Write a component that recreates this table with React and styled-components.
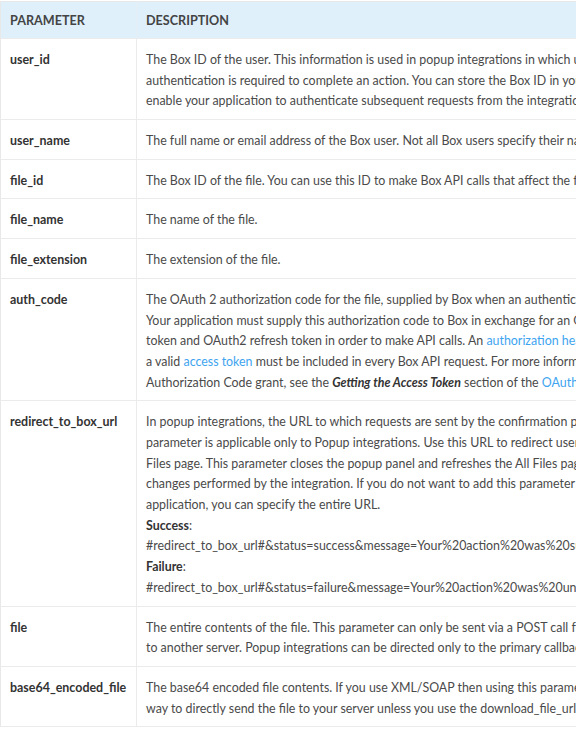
import React from 'react'
import styled, { createGlobalStyle } from 'styled-components'

const GlobalStyle = createGlobalStyle`
  html, body {
    margin: 0;
    padding: 0;
    background: #fff;
    overflow: hidden;
  }
  body {
    font-family: Lato, "Open Sans", sans-serif;
    font-size: 12.4px;
    color: #4a4a4a;
  }
`

const Page = styled.div`
  padding-top: 1px;
  width: 576px;
  overflow: hidden;
`

const Table = styled.table`
  border-collapse: collapse;
  width: 800px;
  table-layout: fixed;
  border-left: 1px solid #e8e8e8;
  border-top: 1px solid #e8e8e8;
`

const HeadCell = styled.th`
  background: #dff0fb;
  color: #444;
  font-size: 12.6px;
  font-weight: 700;
  text-transform: uppercase;
  text-align: left;
  line-height: 21px;
  padding: 8px 9px 7px;
  border-right: 1px solid #e4eef4;
  &:first-child {
    width: 117px;
  }
`

const NameCell = styled.td`
  vertical-align: top;
  font-size: 12.45px;
  font-weight: 700;
  color: #333;
  line-height: 20.7px;
  padding: 11px 9px 7px;
  border-right: 1px solid #ebebeb;
  border-top: 1px solid #ebebeb;
  border-bottom: 1px solid #ebebeb;
`

const DescCell = styled.td`
  vertical-align: top;
  line-height: 20.7px;
  padding: 11px 9px 7px;
  border-top: 1px solid #ebebeb;
  border-bottom: 1px solid #ebebeb;
`

const Line = styled.div`
  white-space: nowrap;
  line-height: 20.7px;
  height: 20.7px;
`

const Link = styled.a`
  color: #3ea4f0;
  text-decoration: none;
`

const Strong = styled.strong`
  font-weight: 700;
  color: #333;
`

const rows = [
  {
    name: 'user_id',
    lines: [
      'The Box ID of the user. This information is used in popup integrations in which user',
      'authentication is required to complete an action. You can store the Box ID in your',
      'enable your application to authenticate subsequent requests from the integration.',
    ],
  },
  {
    name: 'user_name',
    lines: ['The full name or email address of the Box user. Not all Box users specify their name.'],
  },
  {
    name: 'file_id',
    lines: ['The Box ID of the file. You can use this ID to make Box API calls that affect the file.'],
  },
  { name: 'file_name', lines: ['The name of the file.'] },
  { name: 'file_extension', lines: ['The extension of the file.'] },
  {
    name: 'auth_code',
    lines: [
      'The OAuth 2 authorization code for the file, supplied by Box when an authentication',
      'Your application must supply this authorization code to Box in exchange for an OAuth2',
      <>
        token and OAuth2 refresh token in order to make API calls. An{' '}
        <Link href="#">authorization header</Link>
      </>,
      <>
        a valid <Link href="#">access token</Link> must be included in every Box API request. For more information
      </>,
      <>
        Authorization Code grant, see the <Strong><em>Getting the Access Token</em></Strong> section of the{' '}
        <Link href="#">OAuth 2</Link>
      </>,
    ],
  },
  {
    name: 'redirect_to_box_url',
    lines: [
      'In popup integrations, the URL to which requests are sent by the confirmation prompt.',
      'parameter is applicable only to Popup integrations. Use this URL to redirect users',
      'Files page. This parameter closes the popup panel and refreshes the All Files page',
      'changes performed by the integration. If you do not want to add this parameter',
      'application, you can specify the entire URL.',
      <><Strong>Success</Strong>:</>,
      '#redirect_to_box_url#&status=success&message=Your%20action%20was%20successful',
      <><Strong>Failure</Strong>:</>,
      '#redirect_to_box_url#&status=failure&message=Your%20action%20was%20unsuccessful',
    ],
  },
  {
    name: 'file',
    lines: [
      'The entire contents of the file. This parameter can only be sent via a POST call from',
      'to another server. Popup integrations can be directed only to the primary callback',
    ],
  },
  {
    name: 'base64_encoded_file',
    lines: [
      'The base64 encoded file contents. If you use XML/SOAP then using this parameter',
      'way to directly send the file to your server unless you use the download_file_url',
    ],
  },
]

const App = () => {
  return (
    <>
      <GlobalStyle />
      <Page>
        <Table>
          <thead>
            <tr>
              <HeadCell>Parameter</HeadCell>
              <HeadCell>Description</HeadCell>
            </tr>
          </thead>
          <tbody>
            {rows.map((row) => (
              <tr key={row.name}>
                <NameCell>{row.name}</NameCell>
                <DescCell>
                  {row.lines.map((line, i) => (
                    <Line key={i}>{line}</Line>
                  ))}
                </DescCell>
              </tr>
            ))}
          </tbody>
        </Table>
      </Page>
    </>
  )
}

export default App
